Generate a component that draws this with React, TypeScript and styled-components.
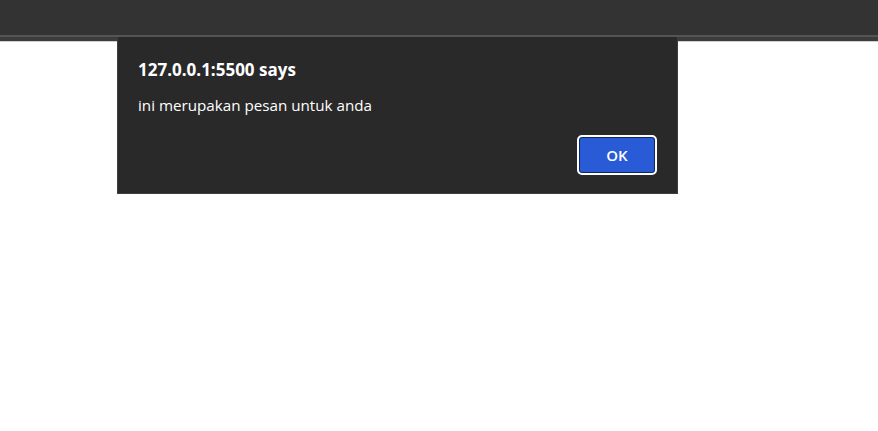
import React from "react";
import styled, { createGlobalStyle } from "styled-components";

const Global = createGlobalStyle`
  html, body { margin: 0; padding: 0; background: #ffffff; }
  body { width: 878px; height: 431px; overflow: hidden; font-family: "Open Sans", "Noto Sans", sans-serif; }
`;

const Page = styled.div`
  position: relative;
  width: 878px;
  height: 431px;
  display: flex;
  flex-direction: column;
`;

const TopBar = styled.div`
  height: 35px;
  background: #333333;
  border-bottom: 2px solid #545454;
`;

const Strip = styled.div`
  height: 4px;
  background: #3c3c3c;
  border-bottom: 1px solid #cfcfcf;
`;

const Content = styled.div`
  flex: 1;
  background: #ffffff;
`;

const Dialog = styled.div`
  position: absolute;
  left: 117px;
  top: 37px;
  width: 561px;
  height: 157px;
  box-sizing: border-box;
  background: #292929;
  border: 1px solid #3e3e3e;
  border-top: none;
  padding: 21px 20px 0 20px;
  display: flex;
  flex-direction: column;
  color: #ffffff;
`;

const Title = styled.div`
  font-family: "Open Sans", "Noto Sans", sans-serif;
  font-weight: 700;
  font-size: 17px;
  line-height: 24px;
`;

const Message = styled.div`
  font-family: "Open Sans", "Noto Sans", sans-serif;
  font-size: 15.2px;
  line-height: 20px;
  margin-top: 13px;
`;

const Actions = styled.div`
  display: flex;
  justify-content: flex-end;
  margin-top: 20px;
`;

const OkButton = styled.button`
  width: 80px;
  height: 40px;
  box-sizing: border-box;
  border-radius: 5px;
  border: 2px solid #ffffff;
  background: #2a5bd7;
  box-shadow: inset 0 0 0 1px #10275e;
  color: #ffffff;
  font-family: "Open Sans", "Noto Sans", sans-serif;
  font-size: 15px;
  font-weight: 600;
  padding: 0;
  cursor: pointer;
`;

export default function App() {
  return (
    <>
      <Global />
      <Page>
        <TopBar />
        <Strip />
        <Content />
        <Dialog>
          <Title>127.0.0.1:5500 says</Title>
          <Message>ini merupakan pesan untuk anda</Message>
          <Actions>
            <OkButton>OK</OkButton>
          </Actions>
        </Dialog>
      </Page>
    </>
  );
}
